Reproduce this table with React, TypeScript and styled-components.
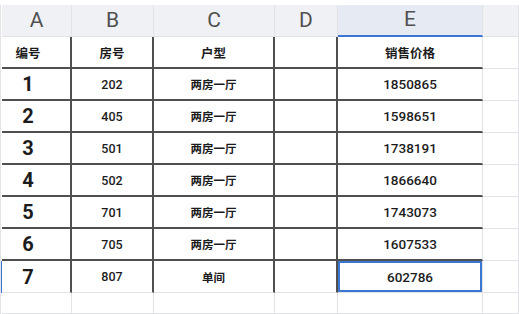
import React from 'react';
import styled, {createGlobalStyle, css} from 'styled-components';

const GlobalStyle = createGlobalStyle`
  html, body {
    margin: 0;
    padding: 0;
    background: #ffffff;
    overflow: hidden;
  }
  body {
    font-family: Roboto, "Noto Sans", "Noto Sans CJK SC", sans-serif;
    color: #1f1f1f;
  }
`;

const LIGHT = '#e1e3e7';
const DARK = '#4f4f4f';
const BLUE = '#3b76d2';

const Sheet = styled.div`
  width: 519px;
  height: 314px;
  padding-top: 5px;
  box-sizing: border-box;
  display: grid;
  grid-template-columns: 2px 70px 82px 121px 63px 145px 1fr;
  grid-template-rows: 32px repeat(8, 32px) 1fr;
`;

const Gutter = styled.div<{$active?: boolean}>`
  background: ${(p) => (p.$active ? BLUE : '#ffffff')};
  border-left: 1px solid ${LIGHT};
`;

const ColHead = styled.div<{$selected?: boolean}>`
  display: flex;
  align-items: center;
  justify-content: center;
  padding-bottom: 2px;
  box-sizing: border-box;
  background: ${(p) => (p.$selected ? '#e6eaf3' : '#eff1f5')};
  border-right: 1px solid ${LIGHT};
  border-bottom: ${(p) => (p.$selected ? `2px solid ${BLUE}` : `1px solid ${LIGHT}`)};
  font-size: 21px;
  font-weight: 400;
  color: #505050;
`;

type Kind = 'title' | 'index' | 'room' | 'type' | 'price' | 'blank';

const kindStyles: Record<Kind, ReturnType<typeof css>> = {
  title: css`
    font-size: 12.5px;
    font-weight: 700;
  `,
  index: css`
    font-size: 20px;
    font-weight: 700;
  `,
  room: css`
    font-size: 12.5px;
    font-weight: 500;
  `,
  type: css`
    font-size: 11.5px;
    font-weight: 600;
  `,
  price: css`
    font-size: 13.5px;
    font-weight: 500;
  `,
  blank: css``,
};

const Cell = styled.div<{
  $kind: Kind;
  $rightDark?: boolean;
  $bottomDark?: boolean;
  $selected?: boolean;
  $shift?: number;
}>`
  display: flex;
  align-items: center;
  justify-content: center;
  box-sizing: border-box;
  padding-right: ${(p) => p.$shift || 0}px;
  border-right: ${(p) => (p.$rightDark ? `2px solid ${DARK}` : `1px solid ${LIGHT}`)};
  border-bottom: ${(p) => (p.$bottomDark ? `2px solid ${DARK}` : `1px solid ${LIGHT}`)};
  box-shadow: ${(p) => (p.$selected ? `inset 0 0 0 2px ${BLUE}` : 'none')};
  color: #1c1c1c;
  white-space: nowrap;
  ${(p) => kindStyles[p.$kind]}
`;

const letters = ['A', 'B', 'C', 'D', 'E', ''];

const rows = [
  {no: '1', room: '202', type: '两房一厅', price: '1850865'},
  {no: '2', room: '405', type: '两房一厅', price: '1598651'},
  {no: '3', room: '501', type: '两房一厅', price: '1738191'},
  {no: '4', room: '502', type: '两房一厅', price: '1866640'},
  {no: '5', room: '701', type: '两房一厅', price: '1743073'},
  {no: '6', room: '705', type: '两房一厅', price: '1607533'},
  {no: '7', room: '807', type: '单间', price: '602786'},
];

const App = () => {
  const last = rows.length - 1;
  return (
    <>
      <GlobalStyle />
      <Sheet>
        <Gutter />
        {letters.map((l, i) => (
          <ColHead key={i} $selected={l === 'E'}>{l}</ColHead>
        ))}

        <Gutter />
        <Cell $kind="title" $rightDark $bottomDark $shift={16}>编号</Cell>
        <Cell $kind="title" $rightDark $bottomDark>房号</Cell>
        <Cell $kind="title" $rightDark $bottomDark>户型</Cell>
        <Cell $kind="blank" $rightDark $bottomDark />
        <Cell $kind="title" $bottomDark>销售价格</Cell>
        <Cell $kind="blank" />

        {rows.map((r, i) => {
          const dark = i !== last;
          return (
            <React.Fragment key={r.no}>
              <Gutter $active={i === last} />
              <Cell $kind="index" $rightDark $bottomDark={dark} $shift={16}>{r.no}</Cell>
              <Cell $kind="room" $rightDark $bottomDark={dark}>{r.room}</Cell>
              <Cell $kind="type" $rightDark $bottomDark={dark}>{r.type}</Cell>
              <Cell $kind="blank" $rightDark $bottomDark={dark} />
              <Cell $kind="price" $bottomDark={dark} $selected={i === last}>{r.price}</Cell>
              <Cell $kind="blank" />
            </React.Fragment>
          );
        })}

        <Gutter />
        {letters.map((_, i) => (
          <Cell key={i} $kind="blank" />
        ))}
      </Sheet>
    </>
  );
};

export default App;
